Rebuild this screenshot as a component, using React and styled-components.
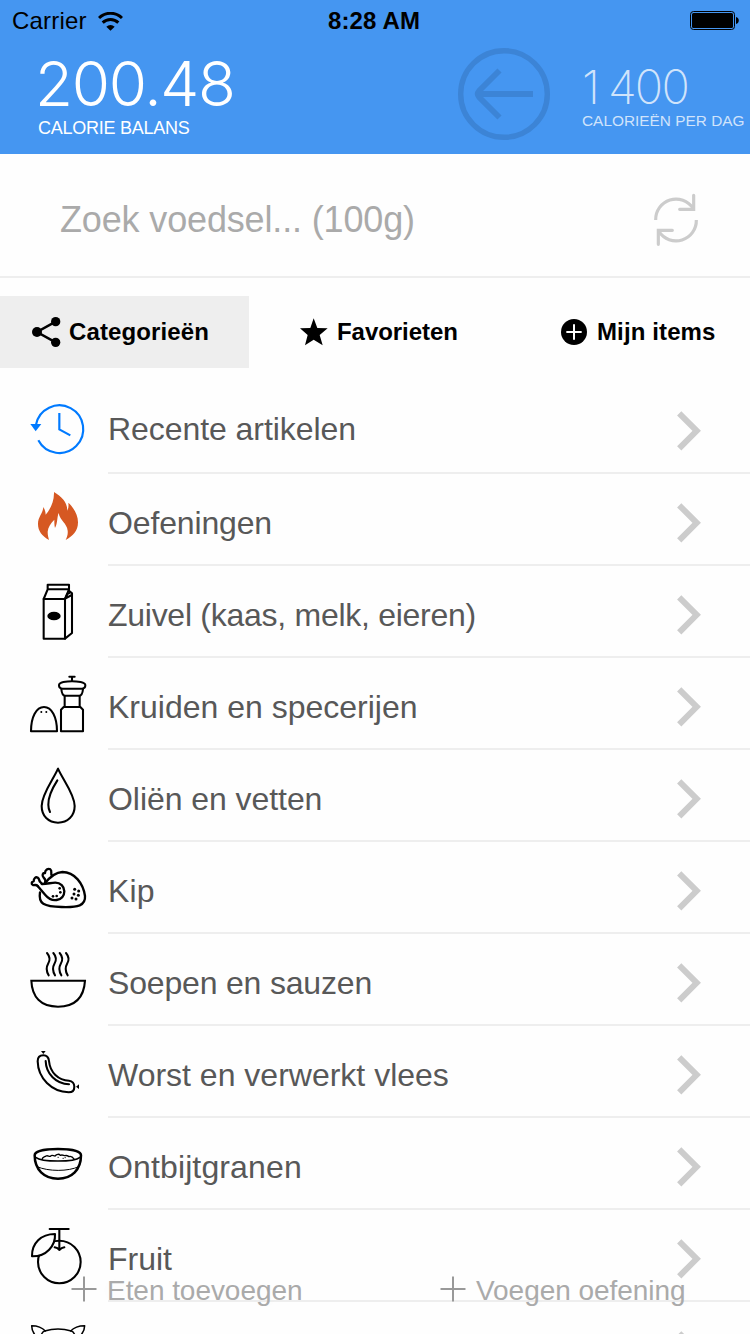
import React from "react";
import styled, { createGlobalStyle } from "styled-components";

const GlobalStyle = createGlobalStyle`
  * { box-sizing: border-box; }
  html, body { margin: 0; padding: 0; background: #fff; overflow: hidden; }
  body { font-family: "Liberation Sans", Arial, sans-serif; }
`;

const Screen = styled.div`
  position: relative;
  width: 750px;
  height: 1334px;
  overflow: hidden;
  background: #fefefe;
`;

const Header = styled.header`
  height: 154px;
  background: #4596f1;
`;

const StatusBar = styled.div`
  display: grid;
  grid-template-columns: 1fr auto 1fr;
  align-items: center;
  height: 42px;
  padding: 0 11px 0 12px;
  color: #000;
  font-size: 24px;
  line-height: 42px;
`;

const Carrier = styled.div`
  display: flex;
  align-items: center;
  gap: 11px;
  letter-spacing: 0.2px;
`;

const Clock = styled.div`
  padding-right: 3px;
  font-weight: 700;
  letter-spacing: 0.15px;
`;

const BatteryIcon = styled.svg`
  display: block;
  justify-self: end;
`;

const Summary = styled.div`
  display: flex;
  height: 112px;
`;

const Balance = styled.div`
  flex: none;
  width: 458px;
  padding: 12px 0 0 38px;
  color: #fff;
`;

const BalanceValue = styled.div`
  margin-left: -3px;
  font-family: Inter, "Liberation Sans", sans-serif;
  font-weight: 260;
  font-size: 62px;
  line-height: 60px;
  letter-spacing: -1.3px;
`;

const BalanceLabel = styled.div`
  margin-top: 2px;
  font-size: 18px;
  line-height: 24px;
  letter-spacing: -0.25px;
`;

const BackIcon = styled.svg`
  display: block;
  flex: none;
  width: 92px;
  height: 92px;
  margin-top: 6px;
`;

const Goal = styled.div`
  padding: 21px 0 0 32px;
  color: rgba(255, 255, 255, 0.75);
  white-space: nowrap;
`;

const GoalValue = styled.div`
  font-family: Inter, "Liberation Sans", sans-serif;
  font-weight: 200;
  font-size: 47px;
  line-height: 48px;
  letter-spacing: -1.8px;

  &::first-letter {
    letter-spacing: 8px;
  }
`;

const GoalLabel = styled.div`
  font-size: 15.4px;
  line-height: 20px;
`;

const SearchBar = styled.div`
  display: flex;
  justify-content: space-between;
  height: 124px;
  padding: 0 51px 0 60px;
  border-bottom: 2px solid #eee;
`;

const Placeholder = styled.div`
  color: #aaa;
  font-size: 36px;
  line-height: 132px;
  letter-spacing: -0.15px;
`;

const RefreshIcon = styled.svg`
  display: block;
  width: 46px;
  height: 54px;
  margin-top: 39px;
`;

const Tabs = styled.nav`
  display: grid;
  grid-template-columns: 249px 249px 252px;
  height: 72px;
  margin: 18px 0 14px;
`;

const Tab = styled.div`
  display: flex;
  align-items: center;
  gap: ${(p) => p.$gap}px;
  padding-left: ${(p) => p.$inset}px;
  background: ${(p) => (p.$active ? "#eee" : "transparent")};
  color: #000;
  font-size: 24px;
  font-weight: 700;
  line-height: 72px;
  letter-spacing: ${(p) => p.$spacing}px;
  white-space: nowrap;
`;

const TabIcon = styled.svg`
  display: block;
  flex: none;
`;

const Row = styled.div`
  display: flex;
  height: 92px;
`;

const RowIcon = styled.svg`
  display: block;
  flex: none;
  width: 108px;
  height: 92px;
  fill: none;
  stroke: #000;
  stroke-width: 6.2;
  stroke-linejoin: round;
  stroke-linecap: round;
`;

const RowBody = styled.div`
  display: flex;
  flex: 1;
  align-items: center;
  justify-content: space-between;
  padding: 8px 49px 0 0;
  border-bottom: 2px solid #eee;
`;

const RowLabel = styled.span`
  margin-bottom: ${(p) => (p.$raised ? 4 : 0)}px;
  color: #585858;
  font-size: 32px;
  line-height: 40px;
  letter-spacing: ${(p) => p.$spacing}px;
`;

const ChevronIcon = styled.svg`
  display: block;
  width: 25px;
  height: 42px;
`;

const Footer = styled.footer`
  position: absolute;
  left: 71px;
  right: 0;
  bottom: 27px;
  display: grid;
  grid-template-columns: 369px 1fr;
  height: 40px;
`;

const Action = styled.div`
  display: flex;
  align-items: center;
  gap: 10px;
  color: #aaa;
  font-size: 28px;
  line-height: 40px;
  letter-spacing: -0.05px;
  text-shadow: 0 0 30px rgba(0, 0, 0, 0.06);
  white-space: nowrap;
`;

const ActionLabel = styled.span`
  padding-top: 4px;
`;

const PlusIcon = styled.svg`
  display: block;
  width: 26px;
  height: 26px;
`;

const WifiIcon = () => (
  <svg width="25" height="19" viewBox="0 0 75 57" fill="none" stroke="#000" strokeWidth="9">
    <path d="M3 18 A49 49 0 0 1 72 18" />
    <path d="M14 32 A34 34 0 0 1 61 32" />
    <path d="M37.500 56 L25 44 A18 18 0 0 1 50 44 Z" fill="#000" stroke="none" />
  </svg>
);

const Chevron = () => (
  <ChevronIcon viewBox="0 0 25 42">
    <path d="M3.200 3.300 L20.700 20.800 L3.200 38.300" fill="none" stroke="#ccc" strokeWidth="6" />
  </ChevronIcon>
);

const Plus = () => (
  <PlusIcon viewBox="0 0 26 26">
    <path d="M0.500 13 H25.500 M13 0.500 V25.500" stroke="#999" strokeWidth="2" />
  </PlusIcon>
);

const RecentIcon = () => (
  <RowIcon viewBox="0 -24 324 276">
    <g stroke="#007aff" strokeWidth="6.500" strokeLinecap="butt" strokeLinejoin="miter">
      <path d="M108 104 A71.500 71.500 0 1 1 115 151" />
      <path d="M178 69 V118 L211 136" />
    </g>
    <path d="M91 102 H124 L107 124 Z" fill="#007aff" stroke="none" />
  </RowIcon>
);

const FlameIcon = () => (
  <RowIcon viewBox="0 252 324 276">
    <path
      d="M162 306 C184 320 202 336 202 362 C206 354 206 347 205 338 C220 352 234 374 234 397 C234 424 218 438 197 450 C202 440 204 431 203 422 C201 400 180 392 176 369 C170 384 174 397 165 414 C163 405 163 397 163 389 C152 400 144 411 143 425 C143 436 145 441 147 450 C126 438 114 423 114 402 C114 380 129 370 130 351 C134 358 137 366 137 374 C149 360 163 337 162 306 Z"
      fill="#d65822"
      stroke="none"
    />
  </RowIcon>
);

const CartonIcon = () => (
  <RowIcon viewBox="0 -12 324 276">
    <path d="M131 87 H195 V206 H131 Z" />
    <path d="M143 44 H207 V58 H143 Z M143 58 L131 87 M207 58 L195 87" />
    <path d="M195 206 L216 189 V70 L207 62 M195 87 L202 72 L210 68 M197 85 L215 75" />
    <ellipse cx="162" cy="138" rx="20" ry="13" fill="#000" stroke="none" />
  </RowIcon>
);

const SpicesIcon = () => (
  <RowIcon viewBox="0 264 324 276">
    <path d="M93 484 C93 441 109 411 132 411 C155 411 171 441 171 484 Z" />
    <path d="M208 320 H224 M216 320 V332" />
    <path d="M190 336 C207 333 225 333 242 336 C252 338 256 341 256 346 C256 352 252 356 245 356 H188 C181 356 177 352 177 346 C177 341 181 338 190 336 Z" />
    <path d="M184 357 C185 368 187 377 195 377 H238 C246 377 248 368 249 357" />
    <path d="M194 378 V410 M239 378 V410" />
    <path d="M191 411 H241 L249 419 V484 H183 V419 Z" />
    <g fill="#000" stroke="none">
      <circle cx="124" cy="426" r="3" />
      <circle cx="139" cy="426" r="3" />
    </g>
  </RowIcon>
);

const DropIcon = () => (
  <RowIcon viewBox="0 0 324 276">
    <path d="M174 56 C161 87 125 132 125 168 C125 198 145 218 174 218 C203 218 224 198 224 168 C224 132 187 87 174 56 Z" />
    <path d="M172 91 C158 113 144 139 145 164 C145 174 147 180 150 186" />
  </RowIcon>
);

const ChickenIcon = () => (
  <RowIcon viewBox="0 276 324 276">
    <g strokeWidth="7">
      <path d="M120 427 C117 446 122 456 130 461 C150 473 220 474 239 466 C250 461 256 450 255 438 C250 401 224 366 187 366 C164 367 149 382 135 400" />
      <path d="M113 408 L136 435 C146 447 156 452 170 450 C184 448 193 438 193 424 C193 409 181 398 166 398 C153 398 143 402 126 402" />
      <path d="M113 408 C109 403 105 406 99 405 C93 402 94 395 101 394 C101 386 107 379 113 383 C119 386 116 392 121 396 C123 398 124 400 126 402" />
      <path d="M135 399 C139 390 135 387 131 383 C125 377 128 368 135 369 C135 360 144 354 151 358 C158 363 150 370 156 377" />
    </g>
    <g fill="#000" stroke="none">
      <circle cx="179" cy="415" r="4" />
      <circle cx="181" cy="427" r="4" />
      <circle cx="170" cy="438" r="4" />
      <circle cx="159" cy="439" r="4" />
      <circle cx="224" cy="418" r="4.500" />
      <circle cx="236" cy="423" r="4.500" />
      <circle cx="222" cy="432" r="4.500" />
      <circle cx="235" cy="436" r="4.500" />
      <circle cx="216" cy="444" r="4.500" />
      <circle cx="228" cy="447" r="4.500" />
    </g>
  </RowIcon>
);

const SoupIcon = () => (
  <RowIcon viewBox="0 -3 324 276">
    <path d="M94 137 H255 C252 185 227 215 174 215 C122 215 96 185 94 137 Z" strokeLinejoin="miter" />
    {[0, 19, 38, 57].map((x) => (
      <path key={x} transform={`translate(${x} 0)`} d="M141 54 C153 68 149 79 144 87 C138 97 138 107 146 121" />
    ))}
  </RowIcon>
);

const SausageIcon = () => (
  <RowIcon viewBox="0 273 324 276">
    <path d="M113 379 C113 367 120 361 130 361 C140 361 146 368 147 378 C150 412 175 436 207 437 C217 438 223 446 223 455 C223 466 216 472 206 472 C155 470 114 430 113 379 Z" />
    <path d="M137 378 C138 416 168 447 207 448" />
    <path d="M123 348 H137 L130 357 Z M237 448 L228 455 L237 462 Z" fill="#000" stroke="none" />
  </RowIcon>
);

const CerealIcon = () => (
  <RowIcon viewBox="0 -6 324 276">
    <path d="M104 106 C104 91 143 87 174 87 C205 87 243 91 243 106 C243 149 216 176 174 176 C132 176 104 149 104 106 Z" strokeWidth="7.500" />
    <path d="M107 112 C126 127 222 127 240 112" strokeWidth="4.500" />
    <path d="M111 140 C145 155 205 155 236 140" strokeWidth="3" />
    <path d="M126 118 C128 110 134 111 138 108 C143 105 147 110 151 109 C156 103 160 108 165 108 C170 102 177 101 181 106 C188 103 191 107 195 107 C201 105 204 108 207 110 C214 107 218 111 223 118" strokeWidth="4" />
    <path d="M174 112 H175 M189 115 H190 M195 113 H196" strokeWidth="3" />
  </RowIcon>
);

const FruitIcon = () => (
  <RowIcon viewBox="0 270 324 276">
    <circle cx="178" cy="426" r="64" />
    <path d="M96 409 C95 370 123 342 165 342 C167 377 139 410 96 409 Z" fill="#fefefe" />
    <path d="M149 327 H206 M178 327 V390 M164 382 C170 383 175 386 178 390 C182 386 187 383 193 382" />
  </RowIcon>
);

const CowIcon = () => (
  <RowIcon viewBox="0 546 324 276">
    <g strokeWidth="4.500">
      <path d="M136 633 C126 622 114 617 95 617 C95 631 101 641 109 650" />
      <path d="M212 633 C222 622 235 617 254 617 C254 631 247 641 239 650" />
      <path d="M122 652 C124 642 125 635 134 633 C158 626 190 626 214 633 C223 635 224 642 226 652" />
    </g>
  </RowIcon>
);

const categories = [
  { label: "Recente artikelen", icon: RecentIcon, spacing: -0.06, raised: true },
  { label: "Oefeningen", icon: FlameIcon, spacing: -0.15 },
  { label: "Zuivel (kaas, melk, eieren)", icon: CartonIcon, spacing: -0.27 },
  { label: "Kruiden en specerijen", icon: SpicesIcon, spacing: 0 },
  { label: "Oliën en vetten", icon: DropIcon, spacing: -0.06 },
  { label: "Kip", icon: ChickenIcon, spacing: 0.2 },
  { label: "Soepen en sauzen", icon: SoupIcon, spacing: -0.18 },
  { label: "Worst en verwerkt vlees", icon: SausageIcon, spacing: 0 },
  { label: "Ontbijtgranen", icon: CerealIcon, spacing: 0.13 },
  { label: "Fruit", icon: FruitIcon, spacing: 0 },
  { label: "", icon: CowIcon, spacing: 0 },
];

export default function App() {
  return (
    <>
      <GlobalStyle />
      <Screen>
        <Header>
          <StatusBar>
            <Carrier>
              Carrier
              <WifiIcon />
            </Carrier>
            <Clock>8:28 AM</Clock>
            <BatteryIcon width="49" height="20" viewBox="0 0 49 20">
              <rect x="0.500" y="0.500" width="44" height="18" rx="3" fill="none" stroke="#000" />
              <rect x="2" y="2" width="41" height="15" rx="1.500" />
              <path d="M46 6 C49.700 6.500 49.700 12.500 46 13 Z" />
            </BatteryIcon>
          </StatusBar>
          <Summary>
            <Balance>
              <BalanceValue>200.48</BalanceValue>
              <BalanceLabel>CALORIE BALANS</BalanceLabel>
            </Balance>
            <BackIcon viewBox="0 0 92 92" fill="none" stroke="#3c84d6">
              <circle cx="46" cy="46" r="43.300" strokeWidth="5.400" />
              <path
                d="M75 46 H20 M41.500 22.500 L21 43 Q18.500 46 21 49 L41.500 69.500"
                strokeWidth="5.800"
              />
            </BackIcon>
            <Goal>
              <GoalValue>1400</GoalValue>
              <GoalLabel>CALORIEËN PER DAG</GoalLabel>
            </Goal>
          </Summary>
        </Header>

        <SearchBar>
          <Placeholder>Zoek voedsel... (100g)</Placeholder>
          <RefreshIcon viewBox="834 114 138 162" fill="none" stroke="#ccc" strokeWidth="9.500">
            <path d="M842 195 A61 61 0 0 1 954 160 M964 195 A61 61 0 0 1 852 230" />
            <path d="M956 121 V163 H914 M850 268 V226 H892" strokeLinecap="round" />
          </RefreshIcon>
        </SearchBar>

        <Tabs>
          <Tab $active $inset={32} $gap={8} $spacing={0.12}>
            <TabIcon width="29" height="30" viewBox="96 483 87 90">
              <path d="M167 497 L111 528 L167 559" fill="none" stroke="#000" strokeWidth="7.500" />
              <circle cx="111" cy="528" r="15" />
              <circle cx="167" cy="497" r="14" />
              <circle cx="167" cy="559" r="14" />
            </TabIcon>
            Categorieën
          </Tab>
          <Tab $inset={51} $gap={9} $spacing={-0.06}>
            <TabIcon width="28" height="28" viewBox="900 486 84 84">
              <path d="M941 487 L952 516 L983 517 L959 537 L968 568 L941 551 L915 568 L923 537 L900 517 L931 516 Z" />
            </TabIcon>
            Favorieten
          </Tab>
          <Tab $inset={63} $gap={10} $spacing={0.12}>
            <TabIcon width="26" height="26" viewBox="558 489 78 78">
              <circle cx="597" cy="528" r="39" />
              <path d="M574 528 H620 M597 505 V551" stroke="#fff" strokeWidth="6" />
            </TabIcon>
            Mijn items
          </Tab>
        </Tabs>

        {categories.map(({ label, icon: Icon, spacing, raised }) => (
          <Row key={label}>
            <Icon />
            <RowBody>
              <RowLabel $raised={raised} $spacing={spacing}>
                {label}
              </RowLabel>
              <Chevron />
            </RowBody>
          </Row>
        ))}

        <Footer>
          <Action>
            <Plus />
            <ActionLabel>Eten toevoegen</ActionLabel>
          </Action>
          <Action>
            <Plus />
            <ActionLabel>Voegen oefening</ActionLabel>
          </Action>
        </Footer>
      </Screen>
    </>
  );
}
